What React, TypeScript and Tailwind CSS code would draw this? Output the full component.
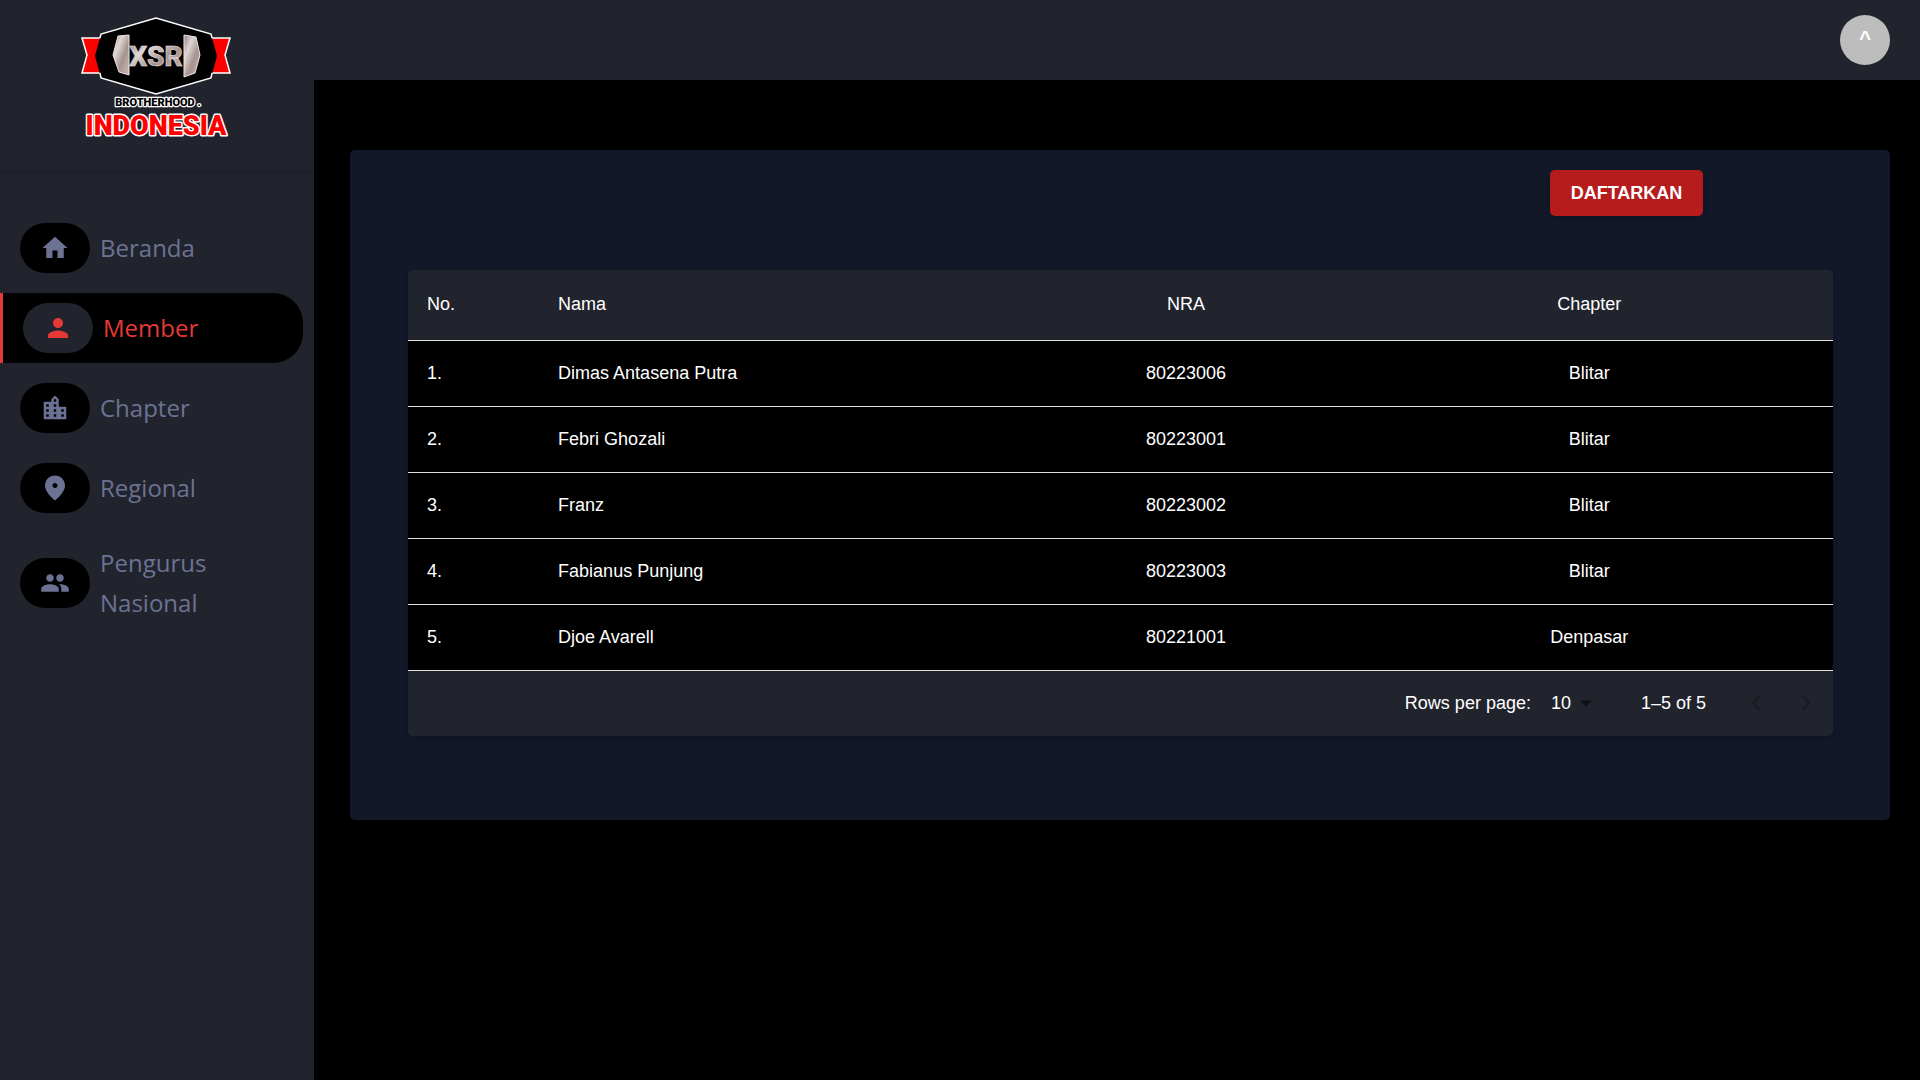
import { MdHome, MdPerson, MdLocationCity, MdPeople, MdKeyboardArrowLeft, MdKeyboardArrowRight, MdArrowDropDown } from "react-icons/md";

function PinIcon({ className }: { className?: string }) {
  return (
    <svg viewBox="0 0 24 24" fill="currentColor" className={className} aria-hidden="true">
      <path d="M12 2c-4.2 0-8 3.22-8 8.2 0 3.32 2.67 7.25 8 11.8 5.33-4.55 8-8.48 8-11.8C20 5.22 16.2 2 12 2zm0 10c-1.100 0-2-.9-2-2s.9-2 2-2 2 .9 2 2-.9 2-2 2z" />
    </svg>
  );
}

const menu = [
  { label: "Beranda", icon: MdHome, active: false },
  { label: "Member", icon: MdPerson, active: true },
  { label: "Chapter", icon: MdLocationCity, active: false },
  { label: "Regional", icon: PinIcon, active: false },
  { label: "Pengurus Nasional", icon: MdPeople, active: false },
];

const members = [
  { name: "Dimas Antasena Putra", nra: "80223006", chapter: "Blitar" },
  { name: "Febri Ghozali", nra: "80223001", chapter: "Blitar" },
  { name: "Franz", nra: "80223002", chapter: "Blitar" },
  { name: "Fabianus Punjung", nra: "80223003", chapter: "Blitar" },
  { name: "Djoe Avarell", nra: "80221001", chapter: "Denpasar" },
];

function Logo() {
  return (
    <svg viewBox="0 0 156 136" className="h-[136px] w-[156px]" role="img" aria-label="XSR Brotherhood Indonesia">
      <defs>
        <linearGradient id="metal" x1="0" y1="0" x2="1" y2="1">
          <stop offset="0" stopColor="#8d8280" />
          <stop offset="0.3" stopColor="#e0d6d4" />
          <stop offset="0.6" stopColor="#a4938f" />
          <stop offset="1" stopColor="#cdbbb7" />
        </linearGradient>
      </defs>
      <g fill="#ff0000" stroke="#fff" strokeWidth="1.5">
        <path d="M3 23H30V58H3L8 40Z" />
        <path d="M151 23H124V58H151L146 40Z" />
      </g>
      <path d="M77 3L132 19L138 41L132 63L77 79L22 63L16 41L22 19Z" fill="#000" />
      <g fill="none" stroke="#fff" strokeWidth="1.5">
        <path d="M21 23L22 19L77 3L132 19L133 23" />
        <path d="M21 58L22 63L77 79L132 63L133 58" />
      </g>
      <g fill="url(#metal)" stroke="#efe6e4" strokeWidth="1">
        <path d="M39 21L50 20V60L40 57L34 40Z" />
        <path d="M117 22L105 20V62L116 58L121 40Z" />
      </g>
      <g fontWeight="900" className="font-['Roboto','Liberation_Sans',sans-serif]" textAnchor="middle">
        <text x="77" y="51" fontSize="28" fill="url(#metal)" stroke="#efe6e4" strokeWidth="0.5">XSR</text>
        <g strokeLinejoin="round" paintOrder="stroke">
          <text x="79" y="91" fontSize="11" fill="#000" stroke="#fff" strokeWidth="2.5">BROTHERHOOD .</text>
          <text x="77" y="120" fontSize="27" fill="#ff0000" stroke="#fff" strokeWidth="3">INDONESIA</text>
        </g>
      </g>
    </svg>
  );
}

export default function App() {
  return (
    <div className="flex min-h-screen bg-black font-['Liberation_Sans',Arial,sans-serif] text-lg leading-[25px] text-white">
      <aside className="w-[314px] shrink-0 bg-[#22242d]">
        <div className="flex h-[175px] items-start justify-center border-b-6 border-[#1e2129] pt-[15px]">
          <Logo />
        </div>
        <nav className="mt-[38px] flex flex-col gap-2.5 pr-[11px] font-['Open_Sans','Noto_Sans',sans-serif] text-2xl leading-10">
          {menu.map(({ label, icon: Icon, active }) => (
            <a
              key={label}
              href="#"
              className={
                active
                  ? "flex min-h-[70px] items-center gap-2.5 rounded-r-[30px] border-l-3 border-[#e53935] bg-black py-2.5 pl-5 text-[#e53935]"
                  : "flex min-h-[70px] items-center gap-2.5 py-2.5 pl-5 text-[#6c7293]"
              }
            >
              <span
                className={
                  active
                    ? "flex h-[50px] w-[70px] shrink-0 items-center justify-center rounded-[25px] bg-[#22242d]"
                    : "flex h-[50px] w-[70px] shrink-0 items-center justify-center rounded-[25px] bg-black"
                }
              >
                <Icon className="size-[30px]" />
              </span>
              <span className="max-w-[130px]">{label}</span>
            </a>
          ))}
        </nav>
      </aside>

      <div className="min-w-0 flex-1">
        <header className="flex h-20 items-center justify-end bg-[#22242d] pr-[30px]">
          <button aria-label="Akun" className="flex size-[50px] items-center justify-center rounded-full bg-[#bdbdbd] pb-1 text-xl font-bold">
            ^
          </button>
        </header>

        <main className="pt-[70px] pr-[30px] pl-9">
          <section className="rounded-[5px] bg-[#131829] pt-5 pr-[57px] pb-[84px] pl-[58px]">
            <div className="flex justify-end pr-[130px]">
              <button className="h-[46px] min-w-[153px] rounded-[5px] bg-[#b71c1c] px-5 font-bold shadow-md">DAFTARKAN</button>
            </div>

            <div className="mt-[54px] overflow-hidden rounded-[5px] bg-[#22242d] shadow-md">
              <table className="w-full table-fixed border-collapse">
                <thead>
                  <tr className="h-[70px] border-b border-[#e0e0e0]">
                    <th className="w-[9.2%] px-[19px] text-left font-normal">No.</th>
                    <th className="w-[34.2%] px-[19px] text-left font-normal">Nama</th>
                    <th className="w-[22.4%] px-[19px] font-normal">NRA</th>
                    <th className="w-[34.2%] px-[19px] font-normal">Chapter</th>
                  </tr>
                </thead>
                <tbody className="bg-black">
                  {members.map((m, i) => (
                    <tr key={m.nra} className="h-[66px] border-b border-[#e0e0e0]">
                      <td className="px-[19px]">{i + 1}.</td>
                      <td className="px-[19px]">{m.name}</td>
                      <td className="px-[19px] text-center">{m.nra}</td>
                      <td className="px-[19px] text-center">{m.chapter}</td>
                    </tr>
                  ))}
                </tbody>
              </table>
              <div className="flex h-[65px] items-center justify-end pr-0.5">
                <label htmlFor="rows">Rows per page:</label>
                <span className="relative ml-5 flex items-center">
                  <select id="rows" defaultValue="10" className="w-11 appearance-none bg-transparent">
                    <option>10</option>
                    <option>25</option>
                    <option>50</option>
                  </select>
                  <MdArrowDropDown className="pointer-events-none absolute inset-y-0 right-[-6px] my-auto size-[30px] text-[#101115]" />
                </span>
                <span className="ml-[46px]">1–5 of 5</span>
                <button aria-label="Halaman sebelumnya" className="ml-[25px] p-2.5 text-[#191b21]">
                  <MdKeyboardArrowLeft className="size-[30px]" />
                </button>
                <button aria-label="Halaman berikutnya" className="p-2.5 text-[#191b21]">
                  <MdKeyboardArrowRight className="size-[30px]" />
                </button>
              </div>
            </div>
          </section>
        </main>
      </div>
    </div>
  );
}
